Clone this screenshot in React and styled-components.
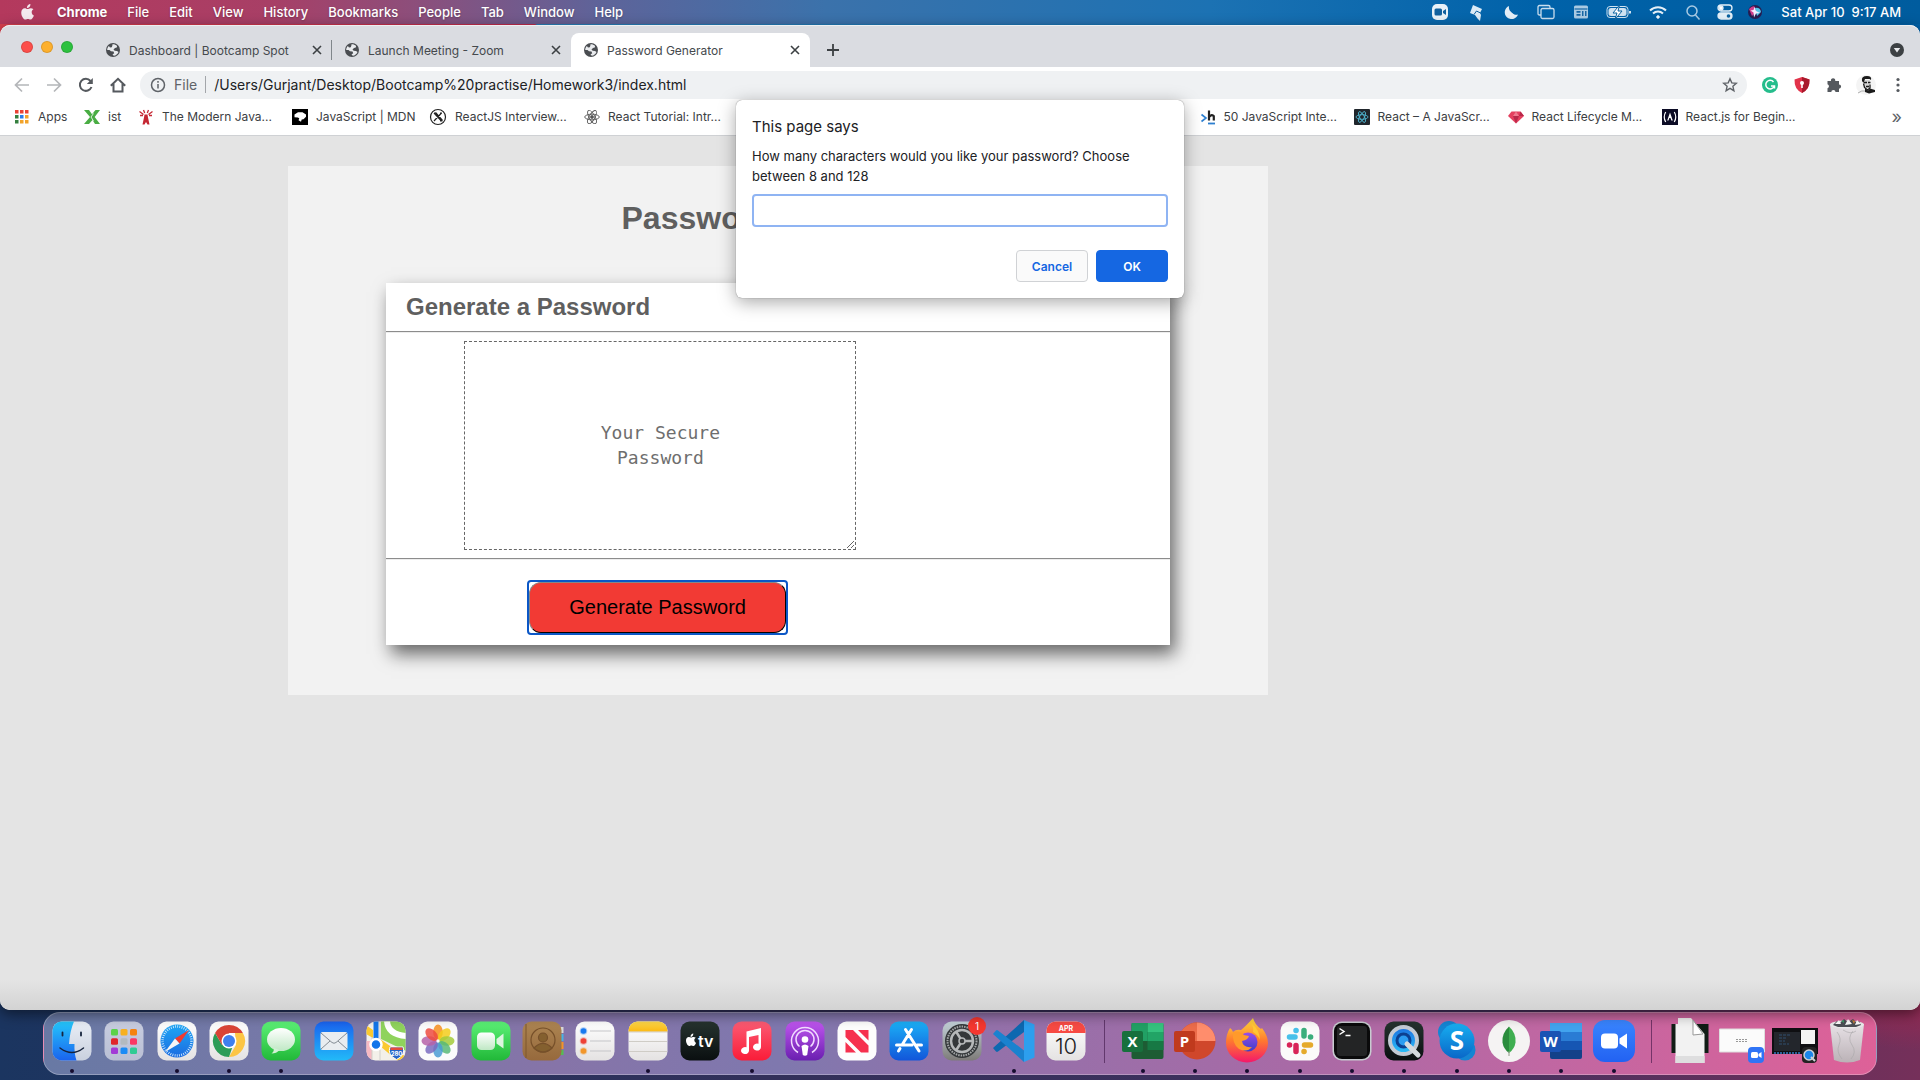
import React from "react";
import styled, { createGlobalStyle } from "styled-components";

const GlobalStyle = createGlobalStyle`
  *, *::before, *::after { box-sizing: border-box; }
  body { margin: 0; font-family: Inter, Roboto, "Liberation Sans", sans-serif; }
  button { font-family: inherit; cursor: pointer; }
  svg { display: block; flex: none; }
`;

/* ---------- desktop ---------- */
const Desktop = styled.div`
  min-height: 100vh;
  display: flex;
  flex-direction: column;
  background:
    linear-gradient(90deg, #d9404e 0, #c12a4c 535px, #2b80b8 537px, #0060a8 100%) top / 100% 60px no-repeat,
    radial-gradient(ellipse 160px 90px at 100% 960px, #b0244c 0, rgba(176, 36, 76, 0) 100%),
    linear-gradient(90deg, #1b3560 0, #32305a 40%, #42315f 75%, #75305a 100%);
`;

const MenuBar = styled.header`
  height: 24px;
  margin-bottom: 1px;
  padding: 0 19px 0 20px;
  display: flex;
  align-items: center;
  color: #fff;
  font-size: 13px;
  font-weight: 500;
  background: linear-gradient(90deg, #b4395d 0, #a83f66 14%, #8b4f7c 22%, #5f6399 31%, #3b72ab 43%, #1c72b3 63%, #0062a9 80%, #005c9e 100%);
`;

const MenuList = styled.nav`
  display: flex;
  align-items: center;
  gap: 20px;
  margin-left: 22px;
`;

const MenuLink = styled.a`
  color: inherit;
  text-decoration: none;
  font-weight: ${(p) => (p.$strong ? 700 : 500)};
  text-shadow: 0 1px 2px rgba(0, 0, 0, 0.25);
`;

const StatusArea = styled.div`
  margin-left: auto;
  display: flex;
  align-items: center;
  gap: 14px;
  white-space: pre;
`;

const Clock = styled.span`
  min-width: 124px;
  text-align: right;
`;

/* ---------- browser window ---------- */
const BrowserWindow = styled.div`
  position: relative;
  flex: 1;
  display: flex;
  flex-direction: column;
  border-radius: 10px;
  background: #fff;
  box-shadow: 0 4px 14px rgba(0, 0, 0, 0.5);
`;

const TabStrip = styled.div`
  height: 42px;
  padding: 0 15px 0 21px;
  display: flex;
  align-items: center;
  background: #dadce1;
  border-top: 1px solid #eceef1;
  border-radius: 10px 10px 0 0;
`;

const Lights = styled.div`
  display: flex;
  gap: 8px;
  margin-right: 20px;
`;

const Light = styled.button`
  width: 12px;
  height: 12px;
  padding: 0;
  border: 1px solid rgba(0, 0, 0, 0.12);
  border-radius: 50%;
  background: ${(p) => p.$color};
`;

const Tab = styled.div`
  position: relative;
  align-self: flex-end;
  width: 239px;
  height: 34px;
  padding: 0 7px 0 12px;
  display: flex;
  align-items: center;
  gap: 8px;
  font-size: 12px;
  color: #45494d;
  border-radius: 8px 8px 0 0;
  background: ${(p) => (p.$active ? "#fff" : "transparent")};
  &::after {
    content: "";
    display: ${(p) => (p.$divider ? "block" : "none")};
    position: absolute;
    right: 0;
    width: 1px;
    height: 20px;
    background: #80868b;
  }
`;

const TabTitle = styled.span`
  flex: 1;
  white-space: nowrap;
  overflow: hidden;
`;

const IconButton = styled.button`
  width: ${(p) => p.$size || 16}px;
  height: ${(p) => p.$size || 16}px;
  padding: 0;
  display: flex;
  align-items: center;
  justify-content: center;
  border: 0;
  background: none;
  color: inherit;
`;

const StripButton = styled(IconButton)`
  align-self: flex-end;
  width: ${(p) => (p.$end ? 16 : 46)}px;
  height: 34px;
  margin-left: ${(p) => (p.$end ? "auto" : 0)};
`;

const Toolbar = styled.div`
  height: 36px;
  padding: 0 12px;
  display: flex;
  align-items: center;
  color: #5f6368;
`;

const NavGroup = styled.div`
  display: flex;
  gap: 12px;
  margin-right: 12px;
`;

const AddressBar = styled.div`
  flex: 1;
  height: 28px;
  padding: 0 9px 1px 10px;
  display: flex;
  align-items: center;
  gap: 8px;
  border-radius: 14px;
  background: #eff1f3;
  font-size: 14px;
`;

const Scheme = styled.label`
  padding-right: 8px;
  border-right: 1px solid #a3a6aa;
`;

const Url = styled.input`
  flex: 1;
  padding: 0;
  border: 0;
  outline: 0;
  background: none;
  color: #202124;
  font: inherit;
`;

const Extensions = styled.div`
  display: flex;
  gap: 12px;
  margin-left: 13px;
`;

const BookmarkBar = styled.nav`
  height: 33px;
  padding: 0 18px 5px 13px;
  display: flex;
  align-items: center;
  border-bottom: 1px solid #cfd1d4;
`;

const Bookmark = styled.a`
  width: ${(p) => p.$width}px;
  display: flex;
  align-items: center;
  gap: 8px;
  font-size: 12px;
  color: #3c4043;
  text-decoration: none;
  white-space: nowrap;
`;

const BookmarkGap = styled.div`
  flex: 1;
`;

const Overflow = styled.button`
  padding: 0;
  border: 0;
  background: none;
  color: #5f6368;
  font-size: 18px;
  line-height: 20px;
`;

/* ---------- page ---------- */
const Page = styled.main`
  flex: 1;
  padding: 30px 15%;
  background: linear-gradient(#e4e4e4 0, #e4e4e4 calc(100% - 30px), #d3d3d3 100%);
  border-radius: 0 0 10px 10px;
  font-family: "Liberation Sans", Arial, sans-serif;
`;

const Wrapper = styled.div`
  max-width: 980px;
  padding-bottom: 50px;
  background: #f2f2f2;
`;

const PageTitle = styled.h1`
  margin: 0;
  padding: 34px 0 46px;
  font-size: 32px;
  line-height: 37px;
  text-align: center;
  color: #5f5f5f;
`;

const Card = styled.section`
  margin: 0 10%;
  padding-bottom: 10px;
  background: #fff;
  box-shadow: 5px 9px 17px rgba(0, 0, 0, 0.58);
`;

const CardTitle = styled.h2`
  margin: 0;
  padding: 10px 20px;
  font-size: 24px;
  line-height: 28px;
  color: #5f5f5f;
`;

const Rule = styled.hr`
  margin: 0;
  border: 0;
  height: 2px;
  background: linear-gradient(#8c8c8c 50%, #ededed 50%);
`;

const PasswordBox = styled.textarea`
  display: block;
  width: 50%;
  height: 209px;
  margin: 8px 10%;
  padding: 78px 120px 0;
  border: 1px dashed #666;
  outline: 0;
  font-family: "DejaVu Sans Mono", "Liberation Mono", monospace;
  font-size: 18px;
  line-height: 25px;
  text-align: center;
  overflow: hidden;
  &::placeholder { color: #6e6e6e; opacity: 1; }
`;

const FocusRing = styled.div`
  width: 261px;
  margin: 20px 0 0 18%;
  border: 2px solid #0b57c6;
  border-radius: 4px;
`;

const GenerateButton = styled.button`
  display: block;
  width: 100%;
  height: 51px;
  border: 1px outset #333;
  border-radius: 12px;
  background: #f23a34;
  color: #000;
  font-family: inherit;
  font-size: 20px;
`;

/* ---------- dialog ---------- */
const Prompt = styled.form`
  position: absolute;
  z-index: 2;
  top: 75px;
  left: 50%;
  width: 448px;
  transform: translateX(-50%);
  padding: 16px;
  border-radius: 6px;
  background: #fff;
  box-shadow: 0 0 1px rgba(0, 0, 0, 0.6), 0 4px 18px rgba(0, 0, 0, 0.35);
  color: #202124;
`;

const PromptTitle = styled.div`
  font-size: 15px;
  line-height: 22px;
  margin-bottom: 8px;
`;

const PromptLabel = styled.label`
  display: block;
  margin-bottom: 8px;
  font-size: 13px;
  line-height: 20px;
`;

const PromptInput = styled.input`
  display: block;
  width: 100%;
  height: 33px;
  padding: 0 8px;
  border: 2px solid #8fb4f3;
  border-radius: 4px;
  outline: 0;
`;

const PromptActions = styled.div`
  display: flex;
  justify-content: flex-end;
  gap: 8px;
  margin-top: 23px;
`;

const PromptButton = styled.button`
  width: 72px;
  height: 32px;
  padding: 0;
  border: 1px solid ${(p) => (p.$primary ? "#1567e2" : "#d0d2d5")};
  border-radius: 4px;
  background: ${(p) => (p.$primary ? "#1567e2" : "#fafafa")};
  color: ${(p) => (p.$primary ? "#fff" : "#1567e2")};
  font-size: 12px;
  font-weight: 600;
`;

/* ---------- dock ---------- */
const DockArea = styled.footer`
  padding: 2px 43px 5px;
`;

const Dock = styled.div`
  display: flex;
  padding: 4px 3px 1px 2px;
  border: 1px solid rgba(255, 255, 255, 0.28);
  border-radius: 17px;
  background: linear-gradient(90deg, #6879a4 0, #7878a8 14%, #8674a8 28%, #7f78ae 40%, #9471aa 52%, #a86aa6 68%, #c067a2 82%, #de6198 100%);
`;

const DockItem = styled.button`
  flex: 1;
  padding: 0;
  border: 0;
  background: none;
  display: flex;
  flex-direction: column;
  align-items: center;
  gap: 4px;
`;

const RunningDot = styled.span`
  width: 4px;
  height: 4px;
  border-radius: 50%;
  background: ${(p) => (p.$on ? "#150c2e" : "transparent")};
`;

const DockDivider = styled.div`
  width: 24px;
  display: flex;
  justify-content: center;
  padding: 3px 0 10px;
  &::before {
    content: "";
    width: 1px;
    background: rgba(60, 20, 70, 0.6);
  }
`;

/* ---------- small icons ---------- */
const Svg = ({ w = 16, h, vb, children, ...rest }) => (
  <svg width={w} height={h || w} viewBox={vb || `0 0 ${w} ${h || w}`} fill="none" aria-hidden="true" {...rest}>
    {children}
  </svg>
);

const Apple = () => (
  <Svg w={15} h={18} vb="0 0 24 28">
    <path fill="#f4e9ee" d="M16.600 1c.2 2-.6 3.700-1.600 4.900-1.100 1.200-2.500 1.900-3.900 1.800-.2-1.800.6-3.600 1.600-4.700C13.700 1.800 15.300 1.100 16.600 1zM21.500 9.700c-1.700 1-2.800 2.500-2.800 4.600 0 2.400 1.400 4.300 3.500 5.100-.7 2.100-2.900 6.600-5.500 6.600-1.500 0-2.200-.9-4-.9s-2.600.9-4 .9c-3.200 0-6.700-6-6.700-11C2 10.600 4.600 8 7.600 8c1.800 0 3.300 1.200 4.500 1.200S15 7.900 17.200 7.900c1.500 0 3.200.6 4.300 1.800z" />
  </Svg>
);

const Globe = () => (
  <Svg>
    <circle cx="8" cy="8" r="7" fill="#4a4d51" />
    <path fill="#e9ebee" d="M7.500 2.200c1.500-.2 3.500.5 4.600 1.800l-.3 1.500-1.800.5-1.500 1.500 1.200 1.300 2.300.2L13.500 10c-.8 2-2.600 3.600-4.700 3.800L7.500 12.500l1.700-1.300L8.500 9.500 6 9.300 4.500 8H2.200c0-1.600.7-3 1.700-4L5 5.500l1.800-.3.5-1.500z" />
  </Svg>
);

const Close = () => (
  <Svg w={10} stroke="#3c4043" strokeWidth="1.600"><path d="M1 1l8 8M9 1l-8 8" /></Svg>
);

const ReactMark = ({ size = 16, color = "#555" }) => (
  <Svg w={size} vb="0 0 16 16" stroke={color} strokeWidth=".9">
    <ellipse cx="8" cy="8" rx="7.300" ry="2.800" />
    <ellipse cx="8" cy="8" rx="7.300" ry="2.800" transform="rotate(60 8 8)" />
    <ellipse cx="8" cy="8" rx="7.300" ry="2.800" transform="rotate(120 8 8)" />
    <circle cx="8" cy="8" r="1.400" fill={color} />
  </Svg>
);

const AppsIcon = () => {
  const c = ["#ea4335", "#ea4335", "#ea4335", "#34803f", "#2b7de9", "#f2a32a", "#34803f", "#f2a32a", "#f2a32a"];
  return (
    <Svg w={17} vb="0 0 17 17">
      {c.map((f, i) => <rect key={i} x={2 + (i % 3) * 5} y={2 + Math.floor(i / 3) * 5} width="3.500" height="3.500" fill={f} />)}
    </Svg>
  );
};

const XIcon = () => (
  <Svg><path fill="#49ad43" d="M0 1h5l3 4.200L11.500 1H16l-5.300 7L16 15h-5l-2.500-4L5 15H0l6-7z" /><path stroke="#fff" strokeWidth=".8" d="M9.500 4.500L7 8l2.500 4" /></Svg>
);

const Lighthouse = () => (
  <Svg stroke="#c52733" strokeWidth="1.300">
    <path fill="#c52733" stroke="none" d="M6.500 5.500h3l.5 3 1.500 7H9.500L8 13l-1.500 2.500h-2L6 8.500z" />
    <path d="M1.500 2.500l4 3M14.500 2.500l-4 3M2 6.500h3M14 6.500h-3M5.500 1l1.200 3M10.500 1L9.300 4" />
  </Svg>
);

const Mdn = () => (
  <Svg><path fill="#000" d="M0 0h16v16H0z" /><path fill="#fff" d="M2.500 5.500L6 3.200h4.500L14 5.500v2.300l-2.500 2.400-1.800.2-.7 2.400-2.500-1.500.8-2-1.500-.8-3.300-.2z" /></Svg>
);

const RingX = () => (
  <Svg w={18} vb="0 0 18 18" stroke="#222" strokeWidth="1.200">
    <circle cx="9" cy="9" r="7.500" />
    <path d="M5 5l7.500 8M6.500 4.500l7 8M12.500 5L5 13M5 5h2M11 13h2.500M11 5h2" />
  </Svg>
);

const HackerMark = () => (
  <Svg>
    <path stroke="#2d7fd0" strokeWidth="1.600" d="M1.500 5.500L6 9l-4.500 3.500" />
    <path stroke="#222" strokeWidth="2.200" d="M9 1.500v10M9 8q3-3.500 4.800-.8v4.300" />
    <path stroke="#2d7fd0" strokeWidth="1.800" d="M8 14.500h7" />
  </Svg>
);

const ReactTile = () => (
  <Svg w={16}>
    <rect width="16" height="16" rx="1" fill="#20262c" />
    <g stroke="#53c1de" strokeWidth=".8">
      <ellipse cx="8" cy="8" rx="6" ry="2.300" />
      <ellipse cx="8" cy="8" rx="6" ry="2.300" transform="rotate(60 8 8)" />
      <ellipse cx="8" cy="8" rx="6" ry="2.300" transform="rotate(120 8 8)" />
    </g>
  </Svg>
);

const Gem = () => (
  <Svg><path fill="#e4405f" d="M3.500 2.500h9L16 7l-8 7.500L0 7z" /><path fill="#b9284a" d="M5 7h6l-3 7.500zM12.500 2.500L16 7h-5z" /><path fill="#ee7a8f" d="M5 7l3-4.500L11 7z" /></Svg>
);

const CampMark = () => (
  <Svg>
    <rect width="16" height="16" fill="#0c0c25" />
    <path stroke="#fff" strokeWidth="1.200" d="M3.700 3Q.8 8 3.700 13M12.300 3q2.900 5 0 10" />
    <path fill="#fff" d="M8 3.500l2.800 8H9.300L8.500 9H7.300l-.8 2.500H5.200z" />
  </Svg>
);

const StatusIcons = () => (
  <>
    <Svg w={22} h={20}><rect x="3" y="2" width="16" height="16" rx="5" fill="#e8f1f8" /><rect x="5.500" y="6.500" width="7.500" height="7" rx="1.500" fill="#10609e" /><path fill="#10609e" d="M14 9l3-2v6l-3-2z" /></Svg>
    <Svg w={22} h={20}><path fill="#dcebf6" d="M8 3l9 4-2 4 1 2-1 6-2.500-2.500L10 13l-5-2z" /><path stroke="#10609e" d="M9 12.500l2.500-3.500 4 2" /></Svg>
    <Svg w={20}><path fill="#e4eef7" d="M8 4a7.500 7.500 0 0 0 9 8.500A6.800 6.800 0 1 1 8 4z" /><path fill="#e4eef7" d="M5 8.500l4 .5 5 5-5 2-4-3z" /></Svg>
    <Svg w={22} h={20} stroke="#c9deee" strokeWidth="1.300"><path d="M6 13H4.500Q3 13 3 11.500V5q0-1.500 1.500-1.500h9Q15 3.500 15 5v1.500" /><rect x="6" y="6.500" width="13" height="10" rx="1.500" /></Svg>
    <Svg w={20}><rect x="3" y="3.500" width="14" height="13" rx="1.500" fill="#a9cae3" /><path stroke="#1766a4" strokeWidth="1.200" d="M3.500 7h13" /><path fill="#1766a4" d="M5.500 9h4v1.800h-4zM5.500 12h4v1.800h-4zM11 9h1.500v5H11zM14 9h1.500v5H14z" /></Svg>
    <Svg w={28} h={20} stroke="#cfe2f1"><rect x="2" y="4.500" width="21" height="11" rx="3" /><rect x="4" y="6.500" width="17" height="7" rx="1.500" fill="#cfe2f1" /><path stroke="#cfe2f1" strokeWidth="2" d="M25 9v2.500" /><path fill="#fff" stroke="#0c629f" d="M14.500 3L8 11h4l-2 6.500L17 9h-4z" /></Svg>
    <Svg w={22} h={20} stroke="#e4eff7" strokeWidth="2"><path d="M3 8.500a11.500 11.500 0 0 1 16 0M6 11.500a7.500 7.500 0 0 1 10 0" /><circle cx="11" cy="15" r="1.300" fill="#fff" strokeWidth="1" /></Svg>
    <Svg w={20} stroke="#a9cbe4" strokeWidth="1.500"><circle cx="9" cy="9" r="5" /><path d="M12.500 13l4 4.500" /></Svg>
    <Svg w={16} h={20} stroke="#e4eff7" strokeWidth="1.300"><rect x="1" y="3" width="14" height="6" rx="3" /><circle cx="4" cy="6" r="2" fill="#fff" /><rect x="1" y="11" width="14" height="6" rx="3" fill="#e4eff7" /><circle cx="11.500" cy="14" r="1.800" fill="#0c629f" stroke="none" /></Svg>
    <Svg w={16} h={20}><circle cx="8" cy="10" r="7" fill="#271c50" /><path fill="#ce3d8c" d="M2 7q4-4 6-2l1 5-4 4z" /><path fill="#54c5e8" d="M8 6q5-1 6 4l-4 4z" /><path fill="#f4ecff" d="M7.500 5l1.500 4 4 2-4 .5-2 4-.5-5-3-2 3-.5z" /></Svg>
  </>
);

/* ---------- dock artwork, 48 × 48 ---------- */
const Tile = ({ fill, children }) => (
  <Svg w={48}>
    <rect x="4.500" y="4.500" width="39" height="39" rx="9" fill={fill} />
    {children}
  </Svg>
);

const Lin = ({ id, from, to, mid }) => (
  <linearGradient id={id} x1="0" y1="0" x2="0" y2="1">
    <stop offset="0" stopColor={from} />
    {mid && <stop offset=".5" stopColor={mid} />}
    <stop offset="1" stopColor={to} />
  </linearGradient>
);

const GradientDefs = styled.svg`
  position: absolute;
  width: 0;
  height: 0;
`;

const Gradients = () => (
  <GradientDefs aria-hidden="true">
    <defs>
      <Lin id="finderBlue" from="#25c6fb" to="#1a63ee" />
      <Lin id="finderPale" from="#e9eef6" to="#c9d0de" />
      <Lin id="paper" from="#ffffff" to="#e4e2e2" />
      <Lin id="launch" from="#c8cde0" to="#b9bfd4" />
      <Lin id="safari" from="#1fa7f5" to="#1b6be0" />
      <Lin id="green" from="#5cf277" to="#21b838" />
      <Lin id="bubble" from="#ffffff" to="#bfe8c4" />
      <Lin id="mail" from="#1a62ee" to="#22baf8" />
      <Lin id="brown" from="#ad8552" to="#96693c" />
      <Lin id="dark" from="#26332f" to="#0a0f10" />
      <Lin id="music" from="#fb5c74" to="#fa1c38" />
      <Lin id="podcast" from="#c056ef" to="#6a1fb0" />
      <Lin id="store" from="#1bb0f6" to="#1256da" />
      <Lin id="gear" from="#c4d3da" to="#7d7b78" />
      <Lin id="fox" from="#ffde3c" mid="#ff7b2e" to="#f3186a" />
      <Lin id="foxCore" from="#9a4de8" to="#3b3ec8" />
      <Lin id="skype" from="#17aef0" to="#0a67c8" />
      <Lin id="zoom" from="#3a86ff" to="#2262f2" />
      <Lin id="yellow" from="#fed94c" to="#fbb914" />
      <Lin id="trash" from="#e8e8ea" to="#b9b6b8" />
      <Lin id="lens" from="#1a6fe0" to="#2cc4fa" />
    </defs>
  </GradientDefs>
);

const Finder = () => (
  <Tile fill="url(#finderPale)">
    <path fill="url(#finderBlue)" d="M13.500 4.500H26q-4 9-5 22.500h5.500q-.5 9 2 16.500h-15a9 9 0 0 1-9-9v-21a9 9 0 0 1 9-9z" />
    <path stroke="#16233c" strokeWidth="1.800" strokeLinecap="round" d="M14.500 15.500v3M33 15.500v3" />
    <path stroke="#16233c" strokeWidth="1.500" strokeLinecap="round" d="M12 31q12 9 23.500 0" />
  </Tile>
);

const Launchpad = () => {
  const c = ["#5bd24a", "#f7b020", "#f5820f", "#e0242b", "#b3bac0", "#fa3864", "#a23bd6", "#1c8bf5", "#2fcb94"];
  return (
    <Tile fill="url(#launch)">
      {c.map((f, i) => <rect key={i} x={11 + (i % 3) * 9.500} y={12 + Math.floor(i / 3) * 9.300} width="7" height="6.500" rx="1.500" fill={f} />)}
    </Tile>
  );
};

const Safari = () => (
  <Tile fill="url(#paper)">
    <circle cx="24" cy="24" r="16.500" fill="url(#safari)" />
    <circle cx="24" cy="24" r="14.500" stroke="#d8efff" strokeWidth="2.500" strokeDasharray=".8 1.400" />
    <path fill="#f03b30" d="M36 13L22 21.500l4.500 5z" /><path fill="#f6f6f6" d="M12 35l10-13.500 4.500 5z" />
  </Tile>
);

const Chrome = () => (
  <Tile fill="url(#paper)">
    <path fill="#d94436" d="M10.100 16A16 16 0 0 1 37.900 16H24z" />
    <path fill="#fcc544" d="M37.900 16A16 16 0 0 1 24 40l7-12-1-12z" />
    <path fill="#2c9c57" d="M24 40A16 16 0 0 1 10.100 16l7 12 10 3z" />
    <path fill="#d94436" d="M10.100 16h13.900v8l-7 4z" />
    <circle cx="24" cy="24" r="7.500" fill="#fff" /><circle cx="24" cy="24" r="6" fill="#3f7fee" />
  </Tile>
);

const Messages = () => (
  <Tile fill="url(#green)">
    <ellipse cx="24" cy="22.500" rx="14" ry="11.500" fill="url(#bubble)" />
    <path fill="#d2f1d5" d="M17 31q0 4-2.500 5.500 5 0 8-3.500z" />
  </Tile>
);

const Mail = () => (
  <Tile fill="url(#mail)">
    <rect x="10.500" y="15" width="27" height="18" rx="2" fill="#e9edf0" />
    <path stroke="#858d95" d="M11 16l11 9.500q2 1.500 4 0L37 16M11 32l9-8M37 32l-9-8" />
  </Tile>
);

const Maps = () => (
  <Svg w={48}>
    <clipPath id="mapClip"><rect x="4.500" y="4.500" width="39" height="39" rx="9" /></clipPath>
    <g clipPath="url(#mapClip)">
      <path fill="#f3f0e9" d="M4 4h40v40H4z" />
      <path fill="#8fd35c" d="M19 4h25v30L19 22z" />
      <path fill="#fbc92f" d="M4 8l7 5v8l-7-4zM18 22l26 18v6h-6L18 29z" />
      <path fill="#f7b9c2" d="M4 24h6v20H4z" />
      <path stroke="#fff" strokeWidth="6" d="M25 4q1 14 20 15" />
      <path stroke="#d1cfca" d="M10 20v24M18 4v40" />
      <path fill="#1376ea" d="M11.500 4h5v22h-5z" />
      <circle cx="14" cy="27.500" r="5.500" fill="#1376ea" stroke="#fff" strokeWidth="2.500" />
      <path fill="#2766c9" stroke="#fff" d="M28 30h13q3 8-6.500 12.500Q25 38 28 30z" /><path fill="#e34b3c" d="M28.500 30.500h12v2.500h-12z" />
    </g>
    <text x="34.500" y="38.500" textAnchor="middle" fontFamily="Inter" fontWeight="700" fontSize="6" fill="#fff">280</text>
  </Svg>
);

const Photos = () => {
  const c = ["#f78f1e", "#f3cd1b", "#a3ca3a", "#58b877", "#4a9bd4", "#7a6bc0", "#b662a8", "#ed4b3f"];
  return (
    <Tile fill="#fbfbfb">
      {c.map((f, i) => <ellipse key={i} cx="24" cy="15" rx="4.800" ry="7.500" fill={f} opacity=".85" transform={`rotate(${i * 45} 24 24)`} />)}
    </Tile>
  );
};

const FaceTime = () => (
  <Tile fill="url(#green)">
    <rect x="10" y="15.500" width="18" height="17.500" rx="4.500" fill="url(#bubble)" /><path fill="#dcf5df" d="M29.500 22l7-5.500v15l-7-5z" />
  </Tile>
);

const Contacts = () => (
  <Svg w={48}>
    <path fill="#d9d9d9" d="M40 10h4.500v6H40z" /><path fill="#46b3e8" d="M40 17h4.500v7H40z" /><path fill="#f2942c" d="M40 25h4.500v7H40z" /><path fill="#54bd54" d="M40 33h4.500v5H40z" />
    <rect x="3.500" y="4.500" width="39" height="39" rx="9" fill="url(#brown)" />
    <g stroke="#76502a" strokeWidth="1.200"><circle cx="24" cy="23" r="12" /><circle cx="24" cy="20.500" r="4.500" fill="#84602f" /><path fill="#84602f" d="M15 31q9-9 18 0-9 8-18 0z" /></g>
    <path stroke="#7d572f" d="M7 7v34" />
  </Svg>
);

const Reminders = () => (
  <Tile fill="url(#paper)">
    {["#1a7af0", "#ee4136", "#f2962a"].map((f, i) => (
      <g key={f}><circle cx="12.500" cy={14 + i * 10} r="2.800" fill={f} stroke={f} strokeOpacity=".35" strokeWidth="2" /><path stroke="#c5c5c8" d={`M19 ${14 + i * 10}h21`} /></g>
    ))}
  </Tile>
);

const Notes = () => (
  <Tile fill="url(#paper)">
    <path fill="url(#yellow)" d="M4.500 14.500v-1a9 9 0 0 1 9-9h21a9 9 0 0 1 9 9v1z" />
    <path stroke="#aaa69c" strokeDasharray="1 1" d="M4.500 15h39" /><path stroke="#cfccc6" d="M5 24.500h38M5 34.500h38" />
  </Tile>
);

const AppleTv = () => (
  <Tile fill="url(#dark)">
    <g transform="translate(9 16) scale(.5)">
      <path fill="#fff" d="M16.600 1c.2 2-.6 3.700-1.600 4.900-1.100 1.200-2.500 1.900-3.900 1.800-.2-1.800.6-3.600 1.600-4.700C13.700 1.800 15.300 1.100 16.600 1zM21.500 9.700c-1.700 1-2.800 2.500-2.800 4.600 0 2.400 1.400 4.300 3.500 5.100-.7 2.100-2.900 6.600-5.500 6.600-1.500 0-2.200-.9-4-.9s-2.600.9-4 .9c-3.200 0-6.700-6-6.700-11C2 10.600 4.600 8 7.600 8c1.800 0 3.300 1.200 4.500 1.200S15 7.900 17.200 7.900c1.500 0 3.200.6 4.300 1.800z" />
    </g>
    <text x="22" y="29.500" fontFamily="Inter" fontWeight="600" fontSize="16" fill="#fff">tv</text>
  </Tile>
);

const Music = () => (
  <Tile fill="url(#music)">
    <path fill="#fff" d="M18.500 14.500L33 11v19a4 3.500 0 1 1-2.500-3.200V18L21 20v13.500a4 3.500 0 1 1-2.500-3.200z" />
  </Tile>
);

const Podcasts = () => (
  <Tile fill="url(#podcast)">
    <path stroke="#f1dcff" strokeWidth="1.500" d="M17 35.500a13.500 13.500 0 1 1 14 0M18.500 29.500a9 9 0 1 1 11 0" />
    <circle cx="24" cy="22.500" r="3.300" fill="#fff" /><path fill="#fff" d="M20.500 29q3.500-3 7 0l-1.300 9q-2.200 1.500-4.400 0z" />
  </Tile>
);

const News = () => (
  <Tile fill="#fdfdfd">
    <path fill="#f6304e" d="M12.500 13h7.500l15.500 15.500V35.500H28L12.500 20zM25 13h10.500v10.500zM12.500 25v10.500H23z" />
  </Tile>
);

const AppStore = () => (
  <Tile fill="url(#store)">
    <path stroke="#fff" strokeWidth="3" strokeLinecap="round" d="M20.500 12.500L34 34M26.500 12.500L17 28M15 31.500l-1.500 2.500M11.500 28H27M32 28h4.500" />
  </Tile>
);

const Settings = () => (
  <Svg w={48}>
    <rect x="4.500" y="4.500" width="39" height="39" rx="9" fill="url(#gear)" />
    <circle cx="24" cy="24" r="17" fill="#34383a" />
    <circle cx="24" cy="24" r="14.500" stroke="#a4a7a8" strokeWidth="2" strokeDasharray="1.500 1" />
    <circle cx="24" cy="24" r="11" stroke="#b5b8b9" strokeWidth="2.500" />
    <path stroke="#b5b8b9" strokeWidth="2.500" d="M24 24h11M24 24l-6 9.500M24 24l-6-9.500" /><circle cx="24" cy="24" r="3" fill="#34383a" stroke="#b5b8b9" strokeWidth="1.500" />
    <circle cx="39" cy="9" r="9" fill="#f5372f" />
    <text x="39" y="12.500" textAnchor="middle" fontFamily="Inter" fontSize="10" fill="#fff">1</text>
  </Svg>
);

const VsCode = () => (
  <Svg w={48}>
    <path fill="#0e68b0" d="M3 31l3 3.500q1 .8 2 0L34 15V3z" />
    <path fill="#1a82cf" d="M3 17l3-3.500q1-.8 2 0L34 33.500V45z" />
    <path fill="#2d9fee" d="M34 3l10.500 4.500v33L34 45z" />
  </Svg>
);

const Calendar = () => (
  <Tile fill="url(#paper)">
    <path fill="#f74a43" d="M4.500 16v-2.500a9 9 0 0 1 9-9h21a9 9 0 0 1 9 9V16z" />
    <text x="24" y="13.500" textAnchor="middle" fontFamily="Inter" fontWeight="700" fontSize="7" fill="#fff">APR</text>
    <text x="24" y="37" textAnchor="middle" fontFamily="Inter" fontWeight="300" fontSize="22" fill="#222">10</text>
  </Tile>
);

const Badge = ({ fill, letter }) => (
  <>
    <rect x="3" y="14" width="21" height="21" rx="2" fill={fill} />
    <text x="13.500" y="30" textAnchor="middle" fontFamily="Open Sans" fontWeight="700" fontSize="15" fill="#fff">{letter}</text>
  </>
);

const Excel = () => (
  <Svg w={48}>
    <rect x="12.500" y="6" width="32" height="36" rx="2" fill="#1d5c34" /><path fill="#21a064" d="M12.500 6h16v18h-16z" /><path fill="#35c27e" d="M28.500 6h16v9h-16z" /><path fill="#22a466" d="M28.500 15h16v9h-16z" /><path fill="#177844" d="M28.500 24h16v9h-16z" />
    <Badge fill="#17703d" letter="X" />
  </Svg>
);

const PowerPoint = () => (
  <Svg w={48}>
    <circle cx="26" cy="24" r="18.500" fill="#d0472b" /><path fill="#ff8d6c" d="M26 5.500A18.500 18.500 0 0 1 44.500 24H26z" /><path fill="#ec6c4a" d="M26 5.500V24H7.500A18.500 18.500 0 0 1 26 5.500z" />
    <Badge fill="#c03a1d" letter="P" />
  </Svg>
);

const Word = () => (
  <Svg w={48}>
    <rect x="13" y="6" width="32" height="36" rx="2" fill="#134189" /><path fill="#41a3ee" d="M13 6h32v9H13z" /><path fill="#2a7cd4" d="M13 15h32v9H13z" /><path fill="#1656b3" d="M13 24h32v9H13z" />
    <Badge fill="#1a53b4" letter="W" />
  </Svg>
);

const Firefox = () => (
  <Svg w={48}>
    <path fill="url(#fox)" d="M7 11q2 1 3 4 3-3 8-2Q23 9 30 1q2 7 8 11l1-1q6 8 6 15a21 19.500 0 0 1-42 0Q3 17 7 11z" />
    <circle cx="25" cy="25" r="9.500" fill="url(#foxCore)" />
    <path fill="#ff9a2b" d="M10 15q6-2 11 3l5 1q-1 4-7 5 1 7 10 6-5 6-13 2Q9 27 10 15z" />
    <path fill="#ffcf35" d="M28 6q9 7 9 17-2-5-7-8 1-4-2-9z" opacity=".8" />
  </Svg>
);

const Slack = () => (
  <Tile fill="#fbfafa">
    <g strokeWidth="5.500" strokeLinecap="round">
      <path stroke="#48c0ea" d="M13.500 20h5.500M20 13.500h.1" /><path stroke="#3bae7c" d="M28 13.500V19M34.500 20h.1" />
      <path stroke="#e5aa2c" d="M28.500 28h6M28 34.500h.1" /><path stroke="#d82458" d="M20 28.500v6M13.500 28h.1" />
    </g>
  </Tile>
);

const Terminal = () => (
  <Tile fill="#c8cbd0">
    <rect x="6" y="6" width="36" height="36" rx="8" fill="#0a0a0b" /><rect x="9" y="9" width="30" height="30" rx="3" fill="#232425" />
    <path stroke="#fff" strokeWidth="1.500" d="M11.500 11.500l4.500 3-4.500 3M17.500 18.500h5" />
  </Tile>
);

const QuickTime = () => (
  <Tile fill="url(#dark)">
    <circle cx="23.500" cy="23.500" r="13.500" fill="url(#lens)" stroke="#c3cad3" strokeWidth="4" /><circle cx="23.500" cy="23.500" r="6.500" stroke="#0c3f90" strokeWidth="3" fill="#2b9cf2" />
    <path stroke="#d5dade" strokeWidth="5" strokeLinecap="round" d="M27 27l11 11" />
  </Tile>
);

const Skype = () => (
  <Svg w={48}>
    <circle cx="16" cy="15" r="11" fill="#1585d3" /><circle cx="32" cy="33" r="10.500" fill="#1585d3" /><circle cx="24" cy="24" r="17.500" fill="url(#skype)" />
    <text x="24" y="33" textAnchor="middle" fontFamily="Open Sans" fontWeight="700" fontSize="26" fill="#fff">S</text>
  </Svg>
);

const Mongo = () => (
  <Svg w={48}><circle cx="24" cy="24" r="21" fill="#f5f3f3" /><path fill="#3fae50" d="M24 9.500q7.500 7 6.500 16-1 6.500-6.500 10.500z" /><path fill="#2a8c3d" d="M24 9.500q-7.500 7-6.500 16 1 6.500 6.500 10.500z" /><path stroke="#8e9a86" d="M24 34v5" /></Svg>
);

const Zoom = () => (
  <Svg w={48}><rect x="3" y="3" width="42" height="42" rx="12" fill="url(#zoom)" /><rect x="11" y="16.500" width="17" height="15" rx="4" fill="#fff" /><path fill="#fff" d="M29.500 21.500l7.500-5v15l-7.500-5z" /></Svg>
);

const Document = () => (
  <Svg w={48}><path fill="#111d16" d="M5.500 7h37v29h-37z" /><path fill="#f2f2f2" d="M12 1h13l13.500 16v29H9.500V7H12z" /><path fill="#fff" stroke="#999" d="M27 3v15l10-1z" /><path fill="#dededf" d="M9.500 39h29v7h-29z" /></Svg>
);

const WindowShot = () => (
  <Svg w={48}><path fill="#fbfbfb" stroke="#ddd" d="M1.500 12h45v23h-45z" /><path stroke="#999" strokeDasharray="2 1" d="M18 22.500h12M18 24.500h12" /><rect x="30" y="30" width="16" height="16" rx="4" fill="#2f74f6" /><rect x="33" y="35" width="7" height="6" rx="1.500" fill="#fff" /><path fill="#fff" d="M40.500 37l3-2v6l-3-2z" /></Svg>
);

const DesktopShot = () => (
  <Svg w={48}><path fill="#0f0f12" d="M1 11h46v26H1z" /><path fill="#23262c" d="M3 15h26v19H3z" /><path fill="#f3f3f3" d="M30 13h14v14H30z" /><path stroke="#3b78b0" d="M8 18h12M8 21h8M8 24h6M8 27h10" strokeDasharray="3 1" opacity=".5" /><path stroke="#377dc3" strokeWidth="1.500" d="M3 36h26" strokeDasharray="2 1" /><rect x="31" y="30" width="15" height="16" rx="4" fill="#222" /><circle cx="38" cy="38" r="5" fill="#1b86ea" stroke="#ccd2d8" strokeWidth="1.500" /><path stroke="#ccd2d8" strokeWidth="2" d="M40 40l4 4" /></Svg>
);

const Trash = () => (
  <Svg w={48}>
    <path fill="url(#trash)" d="M7 7h34l-4 36q-13 5-26 0z" opacity=".95" /><ellipse cx="24" cy="7.500" rx="17" ry="4" fill="#ecebec" />
    <path fill="#4d4f55" d="M10 8l4-4 3 2 4-4 4 3 5-3 3 3 3-1 2 4-5 2H15z" /><path fill="#fff" d="M12 7l4-4 2 4zM22 8l3-6 4 5zM32 8l2-5 4 4z" /><path fill="#3c9a6a" d="M18 4l3-1v3z" /><path fill="#d08238" d="M29 3l3 1-1 3z" />
    <path stroke="#a9a6a8" strokeOpacity=".6" d="M14 15q5 6 2 13t3 14M30 14q-6 7-1 14t-1 14M20 13q8 5 13 1" />
  </Svg>
);

/* ---------- data ---------- */
const MENUS = ["File", "Edit", "View", "History", "Bookmarks", "People", "Tab", "Window", "Help"];

const TABS = [
  { title: "Dashboard | Bootcamp Spot", divider: true },
  { title: "Launch Meeting - Zoom" },
  { title: "Password Generator", active: true },
];

const LEFT_MARKS = [
  { label: "Apps", icon: <AppsIcon />, width: 71 },
  { label: "ist", icon: <XIcon />, width: 54 },
  { label: "The Modern Java...", icon: <Lighthouse />, width: 154 },
  { label: "JavaScript | MDN", icon: <Mdn />, width: 137 },
  { label: "ReactJS Interview...", icon: <RingX />, width: 155 },
  { label: "React Tutorial: Intr...", icon: <ReactMark />, width: 150 },
];

const RIGHT_MARKS = [
  { label: "50 JavaScript Inte...", icon: <HackerMark />, width: 154 },
  { label: "React – A JavaScr...", icon: <ReactTile />, width: 154 },
  { label: "React Lifecycle M...", icon: <Gem />, width: 154 },
  { label: "React.js for Begin...", icon: <CampMark />, width: 230 },
];

const DOCK = [
  [
    ["Finder", Finder, true], ["Launchpad", Launchpad], ["Safari", Safari, true], ["Chrome", Chrome, true],
    ["Messages", Messages, true], ["Mail", Mail], ["Maps", Maps], ["Photos", Photos], ["FaceTime", FaceTime],
    ["Contacts", Contacts], ["Reminders", Reminders], ["Notes", Notes, true], ["TV", AppleTv],
    ["Music", Music, true], ["Podcasts", Podcasts], ["News", News], ["App Store", AppStore],
    ["System Preferences", Settings], ["Visual Studio Code", VsCode, true], ["Calendar", Calendar],
  ],
  [
    ["Excel", Excel, true], ["PowerPoint", PowerPoint, true], ["Firefox", Firefox, true], ["Slack", Slack, true],
    ["Terminal", Terminal, true], ["QuickTime Player", QuickTime, true], ["Skype", Skype, true],
    ["MongoDB Compass", Mongo, true], ["Word", Word, true], ["Zoom", Zoom, true],
  ],
  [["Document", Document], ["Zoom window", WindowShot], ["Recording window", DesktopShot], ["Trash", Trash]],
];

const Marks = ({ items }) =>
  items.map((m) => (
    <Bookmark key={m.label} href="#" $width={m.width}>{m.icon}{m.label}</Bookmark>
  ));

export default function App() {
  return (
    <Desktop>
      <GlobalStyle />
      <Gradients />
      <MenuBar>
        <Apple />
        <MenuList>
          <MenuLink href="#" $strong>Chrome</MenuLink>
          {MENUS.map((m) => <MenuLink key={m} href="#">{m}</MenuLink>)}
        </MenuList>
        <StatusArea>
          <StatusIcons />
          <Clock>Sat Apr 10  9:17 AM</Clock>
        </StatusArea>
      </MenuBar>

      <BrowserWindow>
        <TabStrip>
          <Lights>
            <Light $color="#fc4f4b" aria-label="Close window" />
            <Light $color="#fdb02e" aria-label="Minimise window" />
            <Light $color="#2dc13f" aria-label="Zoom window" />
          </Lights>
          {TABS.map((t) => (
            <Tab key={t.title} $active={t.active} $divider={t.divider}>
              <Globe />
              <TabTitle>{t.title}</TabTitle>
              <IconButton aria-label={`Close ${t.title}`}><Close /></IconButton>
            </Tab>
          ))}
          <StripButton aria-label="New tab">
            <Svg w={14} stroke="#3c4043" strokeWidth="1.800"><path d="M7 1v12M1 7h12" /></Svg>
          </StripButton>
          <StripButton $end aria-label="Search tabs">
            <Svg w={14}><circle cx="7" cy="7" r="7" fill="#3c4043" /><path fill="#e8eaed" d="M3.800 5h6.400L7 9.500z" /></Svg>
          </StripButton>
        </TabStrip>

        <Toolbar>
          <NavGroup>
            <IconButton $size={20} aria-label="Back"><Svg stroke="#b4b6b9" strokeWidth="1.700"><path d="M15 8H2M8 1.500L1.500 8 8 14.500" /></Svg></IconButton>
            <IconButton $size={20} aria-label="Forward"><Svg stroke="#b4b6b9" strokeWidth="1.700"><path d="M1 8h13M8 1.500L14.500 8 8 14.500" /></Svg></IconButton>
            <IconButton $size={20} aria-label="Reload"><Svg stroke="#55595e" strokeWidth="2"><path d="M13.500 10A6 6 0 1 1 12.500 4" /><path fill="#55595e" stroke="none" d="M14.800 1v6h-6z" /></Svg></IconButton>
            <IconButton $size={20} aria-label="Home"><Svg stroke="#55595e" strokeWidth="2"><path d="M.8 8.800L8 1.800l7.200 7M3.500 7v7.500h9V7" /></Svg></IconButton>
          </NavGroup>
          <AddressBar>
            <Svg stroke="#5f6368" strokeWidth="1.500"><circle cx="8" cy="8" r="6.500" /><path d="M8 7v4.500M8 4v1.700" /></Svg>
            <Scheme htmlFor="url">File</Scheme>
            <Url id="url" defaultValue="/Users/Gurjant/Desktop/Bootcamp%20practise/Homework3/index.html" />
            <IconButton aria-label="Bookmark this page"><Svg stroke="#5f6368" strokeWidth="1.400"><path d="M8 1.800l1.800 4.100 4.500.4-3.400 3 1 4.400L8 11.400l-3.900 2.300 1-4.400-3.400-3 4.500-.4z" /></Svg></IconButton>
          </AddressBar>
          <Extensions>
            <IconButton $size={20} aria-label="Grammarly"><Svg><circle cx="8" cy="8" r="8" fill="#25bd8c" /><path stroke="#fff" strokeWidth="1.500" d="M11.500 5A4.300 4.300 0 1 0 12 9.500M9 9h3.500v2.500" /></Svg></IconButton>
            <IconButton $size={20} aria-label="Shield"><Svg><path fill="#e2334a" d="M8 0l7.500 2.500Q16 12 8 16 0 12 .5 2.500z" /><path fill="#a81a2c" d="M8 0l7.500 2.500Q16 12 8 16z" /><circle cx="8" cy="6" r="2" fill="#fff" /><path fill="#fff" d="M7.200 7h1.600v4H7.200z" /></Svg></IconButton>
            <IconButton $size={20} aria-label="Extensions"><Svg><path fill="#55595e" d="M1.500 4H5a2.200 2.200 0 1 1 4.200 0H13v3.500a2.100 2.100 0 1 1 0 4.200V15H9.500a2.100 2.100 0 0 0-4.200 0H1.500v-3.800a2.100 2.100 0 0 0 0-4z" /></Svg></IconButton>
            <IconButton $size={20} aria-label="Profile">
              <Svg w={20}>
                <circle cx="10" cy="10" r="10" fill="#f4f4f4" />
                <path fill="#d6d6d6" d="M7 5h7l-1 8-4 1z" />
                <path fill="#1b1b1b" d="M6 6q-1-5 5-5 5 0 4 4l-1.500-1H9L7.500 8z" />
                <path stroke="#1b1b1b" strokeWidth="1.300" d="M8 7.500h3M12 7.500h2.500M7.500 8.500l1 4 3 2.500 2.500-2V9.500M10 11.500h3" />
                <path fill="#1b1b1b" d="M9 13.500l3 2 2-2 5 1.500v2l-6 1.500-4-1.500z" />
                <path stroke="#aaa" d="M2 18q4-3 7-2" />
              </Svg>
            </IconButton>
            <IconButton $size={20} aria-label="Menu"><Svg><circle cx="8" cy="2.500" r="1.600" fill="#55595e" /><circle cx="8" cy="8" r="1.600" fill="#55595e" /><circle cx="8" cy="13.500" r="1.600" fill="#55595e" /></Svg></IconButton>
          </Extensions>
        </Toolbar>

        <BookmarkBar>
          <Marks items={LEFT_MARKS} />
          <BookmarkGap />
          <Marks items={RIGHT_MARKS} />
          <Overflow aria-label="More bookmarks">»</Overflow>
        </BookmarkBar>

        <Page>
          <Wrapper>
            <PageTitle>Password Generator</PageTitle>
            <Card>
              <CardTitle>Generate a Password</CardTitle>
              <Rule />
              <PasswordBox readOnly aria-label="Your Secure Password" placeholder="Your Secure Password" />
              <Rule />
              <FocusRing>
                <GenerateButton>Generate Password</GenerateButton>
              </FocusRing>
            </Card>
          </Wrapper>
        </Page>

        <Prompt role="dialog" aria-labelledby="promptTitle" onSubmit={(e) => e.preventDefault()}>
          <PromptTitle id="promptTitle">This page says</PromptTitle>
          <PromptLabel htmlFor="length">How many characters would you like your password? Choose between 8 and 128</PromptLabel>
          <PromptInput id="length" type="text" />
          <PromptActions>
            <PromptButton type="button">Cancel</PromptButton>
            <PromptButton type="submit" $primary>OK</PromptButton>
          </PromptActions>
        </Prompt>
      </BrowserWindow>

      <DockArea>
        <Dock>
          {DOCK.map((group, g) => (
            <React.Fragment key={g}>
              {g > 0 && <DockDivider />}
              {group.map(([name, Icon, running]) => (
                <DockItem key={name} aria-label={name}>
                  <Icon />
                  <RunningDot $on={running} />
                </DockItem>
              ))}
            </React.Fragment>
          ))}
        </Dock>
      </DockArea>
    </Desktop>
  );
}
